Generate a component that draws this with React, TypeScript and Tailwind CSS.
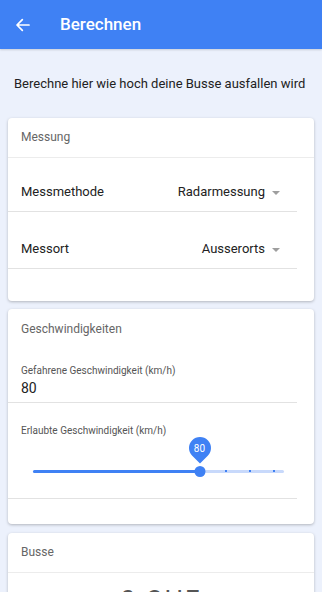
import React from "react";

function Caret() {
  return <span className="ml-[7px] inline-block h-0 w-0 translate-y-[1px] border-x-[4px] border-t-[4px] border-x-transparent border-t-[#9e9e9e]" />;
}

function SelectRow({ label, value, h }: { label: string; value: string; h: string }) {
  return (
    <div className={`mr-[17px] flex items-end justify-between border-b border-[#e2e2e2] pb-[9px] pl-[13px] pr-[17px] ${h}`}>
      <span className="text-[13px] text-[#222]">{label}</span>
      <span className="flex items-center text-[13px] text-[#222]">
        {value}
        <Caret />
      </span>
    </div>
  );
}

function CardHeader({ title, line }: { title: string; line?: boolean }) {
  return (
    <div className={`flex h-[40px] items-center pl-[13px] text-[12px] text-[#666] ${line ? "border-b border-[#ececec]" : ""}`}>{title}</div>
  );
}

export default function App() {
  const pct = (200 - 33) / (284 - 33);
  return (
    <div className="h-[592px] w-[322px] overflow-hidden bg-[#ecf1fc]" style={{ fontFamily: "Roboto, 'Noto Sans', sans-serif" }}>
      <div className="relative z-10 flex h-[49px] items-center bg-[#3f81f4] shadow-[0_1px_2px_rgba(0,0,0,0.15)]">
        <svg className="ml-[15px] h-[16px] w-[16px]" viewBox="0 0 24 24" fill="none" stroke="white" strokeWidth="2.6" strokeLinecap="round" strokeLinejoin="round">
          <path d="M21 12H3.5M11 4l-8 8 8 8" />
        </svg>
        <span className="ml-[29px] text-[17px] font-medium text-white">Berechnen</span>
      </div>

      <p className="mt-[25px] pl-[14px] text-[13px] text-[#222]">Berechne hier wie hoch deine Busse ausfallen wird</p>

      <div className="mx-[8px] mt-[24px] h-[183px] rounded-[4px] bg-white shadow-[0_1px_3px_rgba(0,0,0,0.25)]">
        <CardHeader title="Messung" line />
        <SelectRow label="Messmethode" value="Radarmessung" h="h-[54px]" />
        <SelectRow label="Messort" value="Ausserorts" h="h-[57px]" />
      </div>

      <div className="mx-[8px] mt-[8px] h-[215px] rounded-[4px] bg-white shadow-[0_1px_3px_rgba(0,0,0,0.25)]">
        <CardHeader title="Geschwindigkeiten" />
        <div className="mr-[17px] border-b border-[#e2e2e2] pb-[5px] pl-[13px] pt-[15px]">
          <div className="text-[10px] leading-[14px] text-[#555]">Gefahrene Geschwindigkeit (km/h)</div>
          <div className="mt-[1px] text-[14px] leading-[18px] text-[#222]">80</div>
        </div>
        <div className="mr-[17px] h-[96px] border-b border-[#e2e2e2] pl-[13px] pt-[21px]">
          <div className="text-[10px] leading-[14px] text-[#555]">Erlaubte Geschwindigkeit (km/h)</div>
          <div className="relative ml-[12px] mr-[13px] mt-[32px] h-[3px] rounded bg-[#c8d9fb]">
            <div className="absolute left-0 top-0 h-[3px] rounded bg-[#3f81f4]" style={{ width: `${pct * 100}%` }} />
            {[0.765, 0.861, 0.956].map((p) => (
              <div key={p} className="absolute top-[0.5px] h-[2px] w-[2px] bg-[#3f81f4]" style={{ left: `${p * 100}%` }} />
            ))}
            <div className="absolute top-[-4px] h-[11px] w-[11px] -translate-x-1/2 rounded-full bg-[#3f81f4]" style={{ left: `${pct * 100}%` }} />
            <div className="absolute top-[-33px] flex h-[22px] w-[22px] -translate-x-1/2 rotate-45 items-center justify-center rounded-[50%_50%_0_50%] bg-[#3f81f4]" style={{ left: `${pct * 100}%` }}>
              <span className="-rotate-45 text-[10px] text-white">80</span>
            </div>
          </div>
        </div>
      </div>

      <div className="mx-[8px] mt-[9px] h-[100px] rounded-[4px] bg-white shadow-[0_1px_3px_rgba(0,0,0,0.25)]">
        <CardHeader title="Busse" line />
        <div className="pt-[12px] text-center text-[26px] leading-[30px] tracking-[2px] text-[#555]">0 CHF</div>
      </div>
    </div>
  );
}
